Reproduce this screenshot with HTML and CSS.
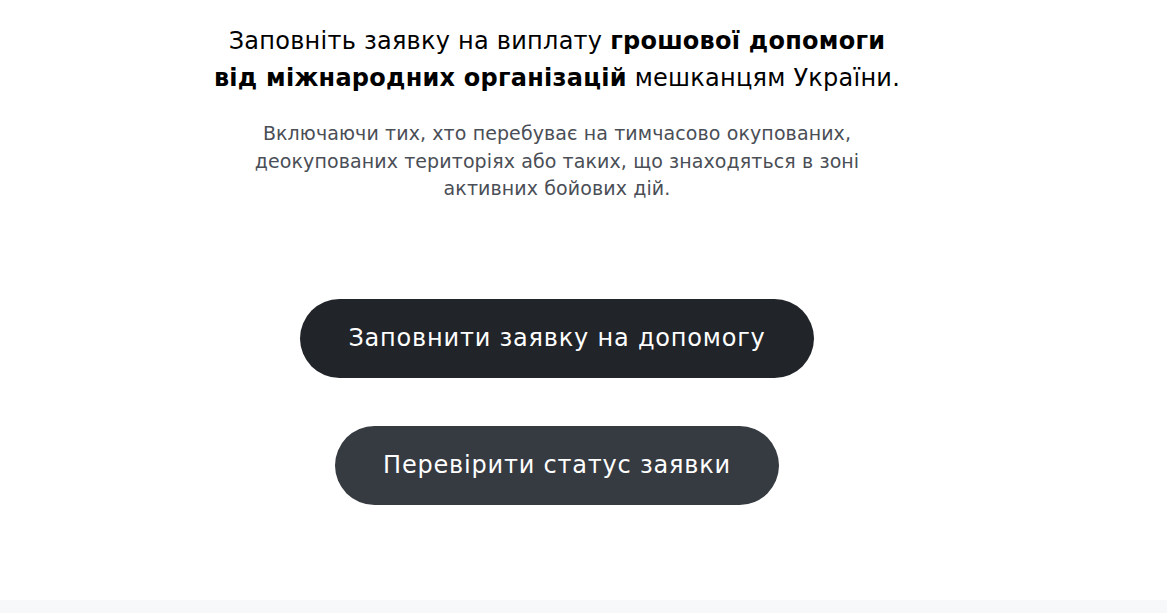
FILE: index.html
```html
<!DOCTYPE html>
<html lang="uk">
<head>
  <meta charset="UTF-8">
  <meta name="viewport" content="width=device-width, initial-scale=1">
  <title>Заявка на допомогу</title>
  <link rel="stylesheet" href="styles.css">
</head>
<body>
  <main class="intro">
    <h1 class="intro-title">Заповніть заявку на виплату <strong>грошової допомоги</strong><br><strong>від міжнародних організацій</strong> мешканцям України.</h1>
    <p class="intro-text">Включаючи тих, хто перебуває на тимчасово окупованих, деокупованих територіях або таких, що знаходяться в зоні активних бойових дій.</p>
    <div class="actions">
      <a class="btn btn-primary" href="#">Заповнити заявку на допомогу</a>
      <a class="btn btn-secondary" href="#">Перевірити статус заявки</a>
    </div>
  </main>
  <footer class="page-footer"></footer>
</body>
</html>
```

FILE: styles.css
```css
* { margin: 0; padding: 0; box-sizing: border-box; }
body { font-family: 'DejaVu Sans', Verdana, sans-serif; background: #fff; color: #000; }
.intro { width: 1114px; height: 600px; text-align: center; padding-top: 23px; }
.intro-title { font-size: 24px; font-weight: normal; line-height: 37px; letter-spacing: 0.25px; }
.intro-title strong { font-weight: bold; }
.intro-text { width: 620px; margin: 23px auto 0; font-size: 19px; line-height: 27.5px; letter-spacing: 0.1px; color: #4a4e56; }
.actions { display: flex; flex-direction: column; align-items: center; gap: 48px; margin-top: 96px; }
.btn { display: inline-block; height: 79px; line-height: 79px; padding: 0 48px; border-radius: 40px; color: #fff; text-decoration: none; font-size: 24px; letter-spacing: 0.8px; }
.btn-primary { background: #212429; }
.btn-secondary { background: #363a41; }
.page-footer { height: 13px; background: #f7f8fa; }
```
